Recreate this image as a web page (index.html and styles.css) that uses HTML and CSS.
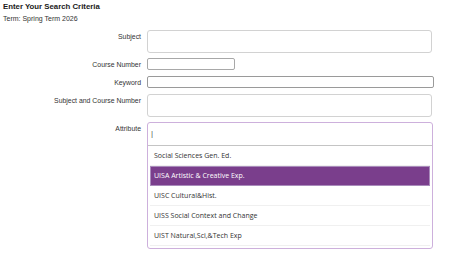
FILE: index.html
```html
<!DOCTYPE html>
<html lang="en">
<head>
    <meta charset="UTF-8">
    <title>Search Criteria</title>
    <link rel="stylesheet" href="styles.css">
</head>
<body>

<h2 class="title">Enter Your Search Criteria</h2>
<div class="term">Term: Spring Term 2026</div>

<form class="search-form">
    <label for="subject">Subject</label>
    <div class="field"><input type="text" id="subject" class="tall"></div>

    <label for="courseNumber">Course Number</label>
    <div class="field"><input type="text" id="courseNumber" class="short"></div>

    <label for="keyword" class="kw-label">Keyword</label>
    <div class="field kw-field"><input type="text" id="keyword" class="line"></div>

    <label for="subjCourse">Subject and Course Number</label>
    <div class="field"><input type="text" id="subjCourse" class="tall"></div>

    <label for="attribute">Attribute</label>
    <div class="field">
        <div class="combo">
            <div class="combo-input"><span class="caret">|</span></div>
            <ul class="combo-list">
                <li>Social Sciences Gen. Ed.</li>
                <li class="active">UISA Artistic &amp; Creative Exp.</li>
                <li>UISC Cultural&amp;Hist.</li>
                <li>UISS Social Context and Change</li>
                <li>UIST Natural,Sci,&amp;Tech Exp</li>
            </ul>
        </div>
    </div>
</form>

</body>
</html>
```

FILE: styles.css
```css
body {
    margin: 0;
    padding: 3px;
    font-family: "Liberation Sans", Arial, sans-serif;
    color: #333;
    background: #fff;
}
.title {
    margin: 0;
    font-size: 7.8px;
    line-height: 8px;
    color: #1a1a1a;
}
.term {
    margin-top: 4px;
    font-size: 7px;
    line-height: 8px;
    color: #333;
}
.search-form {
    display: grid;
    grid-template-columns: 138px 286px;
    column-gap: 6px;
    row-gap: 5px;
    margin-top: 7px;
}
.search-form label {
    text-align: right;
    font-size: 6.9px;
    line-height: 8px;
    padding-top: 3px;
    color: #333;
}
.search-form .kw-label,
.search-form .kw-field {
    margin: 1px 0;
}
.search-form input {
    display: block;
    box-sizing: border-box;
    margin: 0;
    padding: 0 4px;
    font-size: 7px;
    background: #fff;
}
.tall {
    width: 285px;
    height: 23px;
    border: 1px solid #d2d2d2;
    border-radius: 3px;
}
.short {
    width: 88px;
    height: 12px;
    border: 1px solid #a8a8a8;
    border-radius: 2px;
}
.line {
    width: 287px;
    height: 12px;
    border: 1px solid #9a9a9a;
    border-radius: 2px;
}
.combo {
    box-sizing: border-box;
    width: 286px;
    border: 1px solid #cdb0dc;
    border-radius: 3px;
}
.combo-input {
    height: 22px;
    border-bottom: 1px solid #c4c4c4;
    font-size: 7px;
    line-height: 22px;
}
.caret {
    margin-left: 3px;
    color: #555;
    font-size: 8px;
}
.combo-list {
    list-style: none;
    margin: 0;
    padding: 0 2px 2px;
    font-family: "Open Sans", sans-serif;
    font-size: 7px;
}
.combo-list li {
    height: 19px;
    line-height: 19px;
    padding-left: 4px;
    border-bottom: 1px solid #f0f0f0;
    color: #333;
}
.combo-list li.active {
    background: #7a3e8c;
    color: #fff;
    border: 1px solid #a98bbb;
    height: 18px;
    line-height: 18px;
    padding-left: 3px;
}
```
